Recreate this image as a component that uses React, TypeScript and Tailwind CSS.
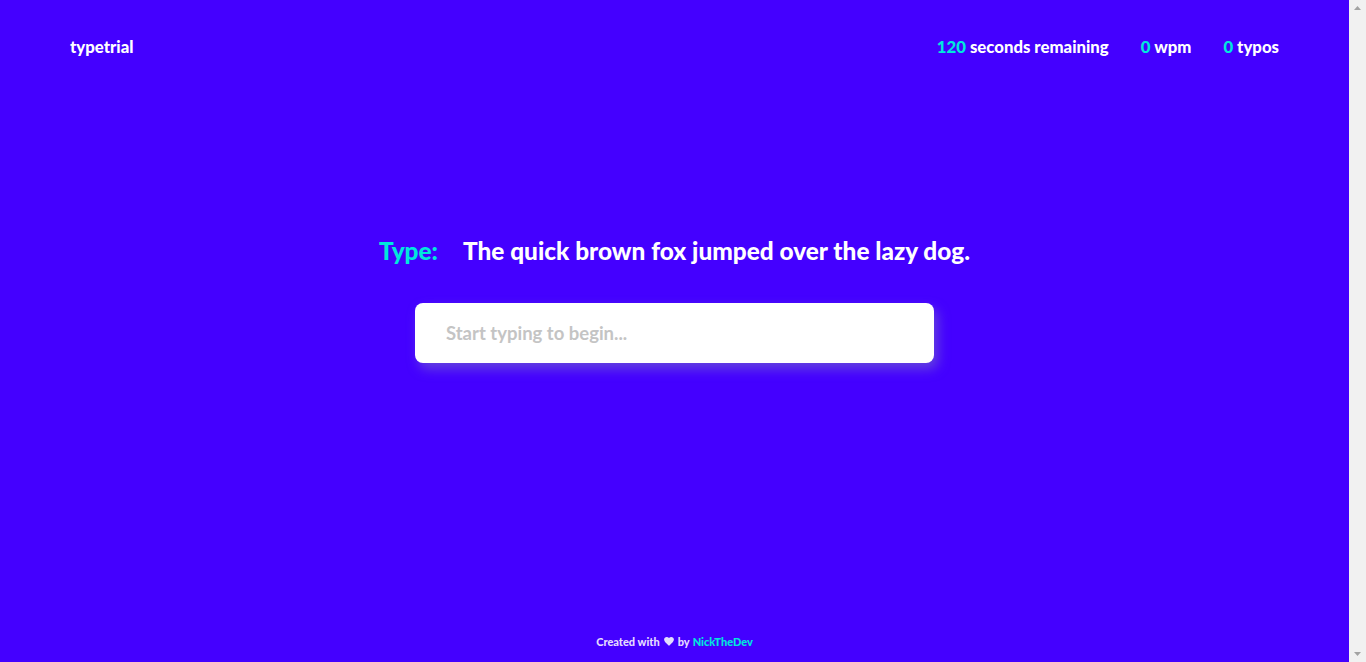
import { useState } from 'react'

export default function App() {
  const [text, setText] = useState('')

  return (
    <div className="h-screen flex overflow-hidden">
      <div
        className="flex-1 min-w-0 flex flex-col bg-[#4400ff] text-white"
        style={{ fontFamily: 'Lato, "Open Sans", sans-serif' }}
      >
        {/* Header */}
        <header className="h-[94px] px-[70px] flex items-center justify-between font-black text-[16.75px]">
          <span>typetrial</span>

          <div className="flex items-center gap-8">
            <span>
              <span className="text-[#00e8dc]">120</span> seconds remaining
            </span>
            <span>
              <span className="text-[#00e8dc]">0</span> wpm
            </span>
            <span>
              <span className="text-[#00e8dc]">0</span> typos
            </span>
          </div>
        </header>

        {/* Trial */}
        <main className="flex-1 flex flex-col items-center pt-[145px]">
          <h1 className="flex items-center gap-[25px] text-[24.4px] font-black leading-none">
            <span className="text-[#00e8dc]">Type:</span>
            <span>The quick brown fox jumped over the lazy dog.</span>
          </h1>

          <input
            value={text}
            onChange={e => setText(e.target.value)}
            placeholder="Start typing to begin..."
            className="mt-[40px] w-[519px] h-[60px] rounded-lg bg-white px-[31px] text-[18.5px] font-bold text-gray-800 placeholder:text-[#c4c4c4] outline-none shadow-[4px_6px_12px_rgba(120,110,200,0.6)]"
          />
        </main>

        {/* Footer */}
        <footer className="pb-[12px] flex items-center justify-center gap-[3px] text-[11px] font-black text-[#e4dcff]">
          <span>Created with</span>
          <svg width="10" height="9" viewBox="0 0 24 22" className="mx-[1px]">
            <path
              d="M12 21.5l-1.7-1.5C4.2 14.5 0 10.8 0 6.3 0 2.7 2.8 0 6.5 0c2.1 0 4.1 1 5.5 2.5C13.4 1 15.4 0 17.5 0 21.2 0 24 2.7 24 6.3c0 4.5-4.2 8.2-10.3 13.7z"
              fill="#e4dcff"
            />
          </svg>
          <span>by</span>
          <span className="text-[#00e8dc]">NickTheDev</span>
        </footer>
      </div>

      {/* Scrollbar */}
      <div className="w-[17px] shrink-0 bg-[#f1f1f1] flex flex-col items-center justify-between py-[6px]">
        <svg width="7" height="4" viewBox="0 0 7 4">
          <path d="M3.5 0L7 4H0z" fill="#a3a3a3" />
        </svg>
        <svg width="7" height="4" viewBox="0 0 7 4">
          <path d="M0 0h7L3.5 4z" fill="#a3a3a3" />
        </svg>
      </div>
    </div>
  )
}
